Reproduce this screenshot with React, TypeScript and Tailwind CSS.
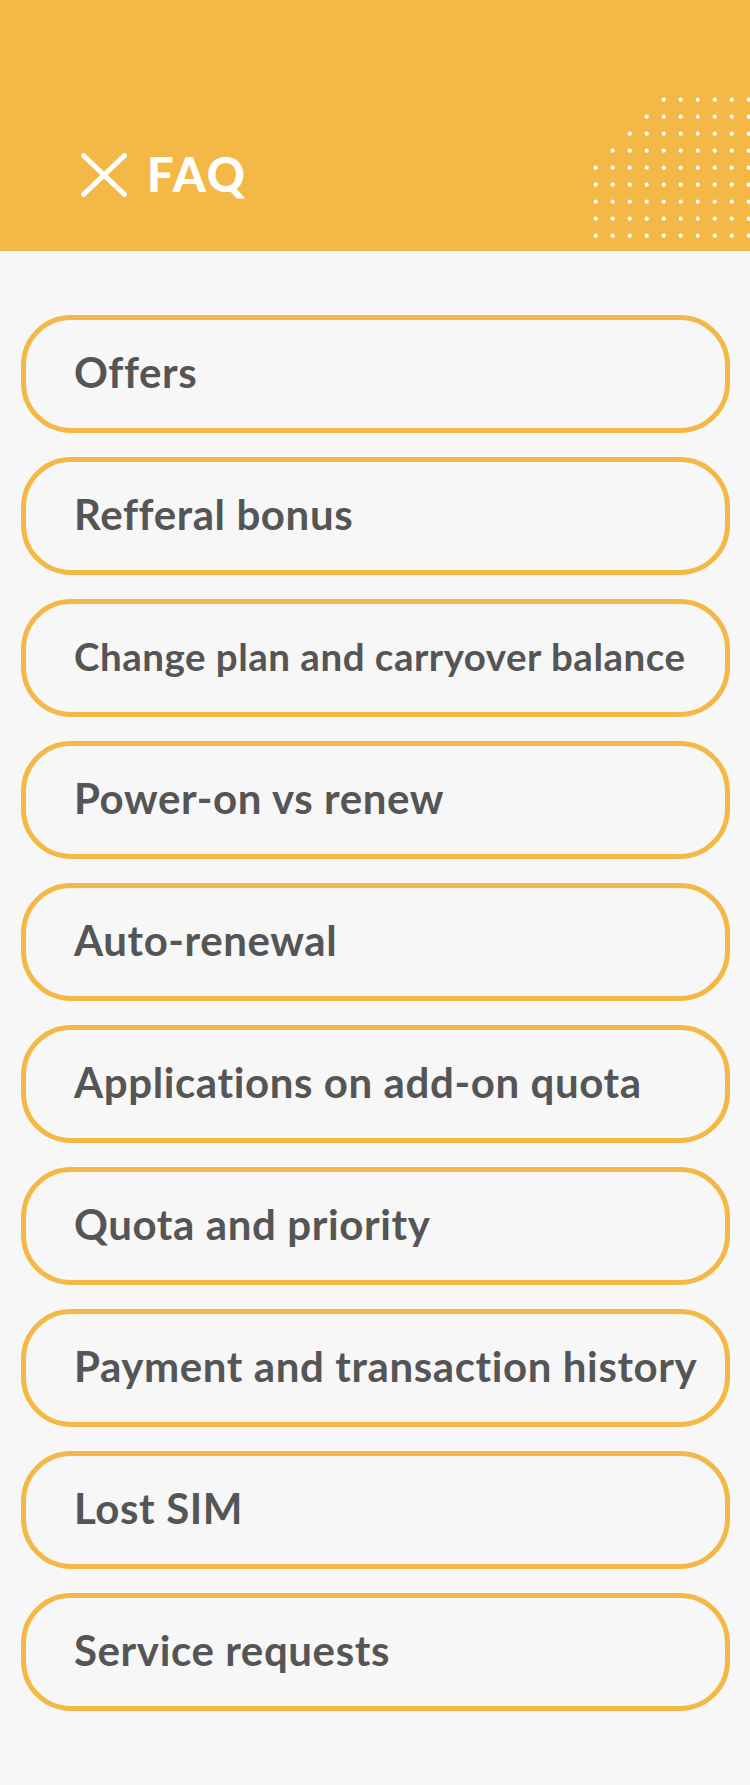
import { Fragment } from 'react';

const TOPICS: { label: string; small?: boolean }[] = [
    { label: 'Offers' },
    { label: 'Refferal bonus' },
    { label: 'Change plan and carryover balance', small: true },
    { label: 'Power-on vs renew' },
    { label: 'Auto-renewal' },
    { label: 'Applications on add-on quota' },
    { label: 'Quota and priority' },
    { label: 'Payment and transaction history' },
    { label: 'Lost SIM' },
    { label: 'Service requests' },
];

function DotPattern() {
    const rows = Array.from({ length: 9 }, (_, r) => r);
    const cols = Array.from({ length: 10 }, (_, c) => c);
    return (
        <svg className="absolute left-0 top-0" width="750" height="251" viewBox="0 0 750 251" aria-hidden>
            {rows.map((r) => (
                <Fragment key={r}>
                    {cols
                        .filter((c) => c >= 4 - r)
                        .map((c) => (
                            <circle key={c} cx={595.7 + c * 17} cy={99.7 + r * 17} r="2.1" fill="#fff" />
                        ))}
                </Fragment>
            ))}
        </svg>
    );
}

export default function App() {
    return (
        <div className="min-h-[1785px] w-[750px] bg-[#f7f7f7] font-['Lato','Liberation_Sans',sans-serif]">
            {/* Header */}
            <header className="relative h-[251px] overflow-hidden bg-[#f3b845]">
                <DotPattern />
                <div className="relative flex items-center gap-[20px] pl-[81px] pt-[151px]">
                    <svg width="46" height="44" viewBox="0 0 46 44" fill="none" stroke="#fff" strokeWidth="5" strokeLinecap="round">
                        <path d="M2.5 2.5 L43.5 41.5" />
                        <path d="M43.5 2.5 L2.5 41.5" />
                    </svg>
                    <h1 className="text-[47px] font-black leading-none tracking-[2px] text-white">FAQ</h1>
                </div>
            </header>

            {/* Topics */}
            <div className="flex flex-col gap-[24px] pl-[21px] pr-[20px] pt-[64px]">
                {TOPICS.map((t) => (
                    <button
                        key={t.label}
                        className="flex h-[118px] items-center rounded-[50px] border-[5px] border-[#f3b845] pb-[4px] pl-[48px] text-left"
                    >
                        <span
                            className={
                                t.small
                                    ? 'whitespace-nowrap text-[38.5px] font-bold leading-none tracking-[0.5px] text-[#555555]'
                                    : 'whitespace-nowrap text-[42px] font-bold leading-none tracking-[0.6px] text-[#555555]'
                            }
                        >
                            {t.label}
                        </span>
                    </button>
                ))}
            </div>
        </div>
    );
}
